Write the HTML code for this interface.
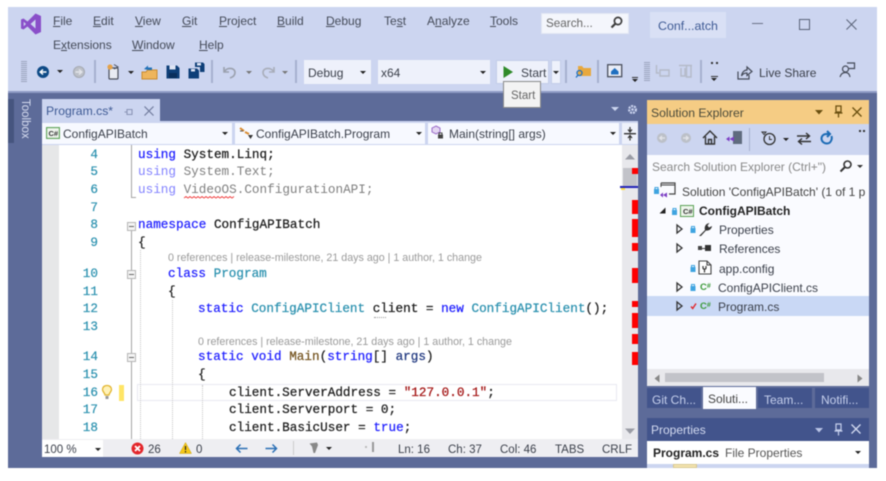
<!DOCTYPE html>
<html><head><meta charset="utf-8"><style>
html,body{margin:0;padding:0;background:#fff;width:886px;height:481px;overflow:hidden}
#s{position:absolute;left:0;top:0;width:886px;height:481px;overflow:hidden;filter:blur(.5px);font-family:"Liberation Sans",sans-serif}
.r{position:absolute}
.t{position:absolute;white-space:nowrap;font-size:12px;line-height:16px;color:#3a3f4a}
.m{color:#444a58}
.m u{text-decoration:underline;text-underline-offset:1px}
.c{position:absolute;white-space:pre;font:12.66px/16px "Liberation Mono",monospace;color:#1c1c1c;-webkit-text-stroke:.25px currentColor}
.n{position:absolute;width:20px;text-align:right;left:78px;font:12.66px/16px "Liberation Mono",monospace;color:#2b91af;-webkit-text-stroke:.2px currentColor}
.k{color:#1f1fff}.y{color:#2b91af}.g{color:#8a8a8a}
.l{position:absolute;white-space:nowrap;font-size:10.7px;line-height:14px;color:#9a9a9a}
.w{position:absolute;width:0;border-left:4px solid transparent;border-right:4px solid transparent;border-top:4px solid #222}
.x{position:absolute;width:0;border-left:3px solid transparent;border-right:3px solid transparent;border-top:3px solid #222}
.b{position:absolute;background:#fff}
.red{position:absolute;left:632px;width:6px;background:#f00}
svg{position:absolute;overflow:visible}
</style></head><body><div id="s">
<!-- frame -->
<div class="r" style="left:8px;top:7px;width:869px;height:461px;background:#ccd5f0"></div>
<div class="r" style="left:8px;top:92px;width:869px;height:376px;background:#5d6b99"></div>
<div class="r" style="left:8px;top:91px;width:869px;height:2px;background:#8f9bc4"></div>

<!-- VS logo -->
<svg style="left:20px;top:13px" width="22" height="22" viewBox="0 0 22 22"><path d="M15.5 0.5 L21 3 V19 L15.5 21.5 L7.5 13.5 L3.5 16.5 L1 15.5 V6.5 L3.5 5.5 L7.5 8.5 Z M15.5 6.5 L10.5 11 L15.5 15.5 Z M3.7 8.7 V13.3 L6 11 Z" fill="#8a4fc9" fill-rule="evenodd"/></svg>

<!-- menus -->
<div class="t m" style="left:53px;top:13px"><u>F</u>ile</div>
<div class="t m" style="left:93px;top:13px"><u>E</u>dit</div>
<div class="t m" style="left:135px;top:13px"><u>V</u>iew</div>
<div class="t m" style="left:182px;top:13px"><u>G</u>it</div>
<div class="t m" style="left:219px;top:13px"><u>P</u>roject</div>
<div class="t m" style="left:277px;top:13px"><u>B</u>uild</div>
<div class="t m" style="left:326px;top:13px"><u>D</u>ebug</div>
<div class="t m" style="left:384px;top:13px">Te<u>s</u>t</div>
<div class="t m" style="left:427px;top:13px">A<u>n</u>alyze</div>
<div class="t m" style="left:490px;top:13px"><u>T</u>ools</div>
<div class="t m" style="left:53px;top:37px">E<u>x</u>tensions</div>
<div class="t m" style="left:132px;top:37px"><u>W</u>indow</div>
<div class="t m" style="left:199px;top:37px"><u>H</u>elp</div>

<!-- search -->
<div class="b" style="left:541px;top:13px;width:88px;height:21px;background:#f4f6fc;border:1px solid #e2e6f4;box-sizing:border-box"></div>
<div class="t" style="left:546px;top:16px;color:#666;font-size:11.7px">Search...</div>
<svg style="left:609px;top:15px" width="16" height="16" viewBox="0 0 16 16"><circle cx="9" cy="6" r="3.6" fill="none" stroke="#3c3c3c" stroke-width="1.7"/><path d="M6.5 8.5 L2.5 12.5" stroke="#3c3c3c" stroke-width="2.2"/></svg>
<!-- title -->
<div class="r" style="left:650px;top:12px;width:76px;height:26px;background:#d9e0f5"></div>
<div class="t" style="left:658px;top:18px;color:#3e5a94;font-size:12.4px">Conf...atch</div>
<!-- window btns -->
<div class="r" style="left:752px;top:23px;width:11px;height:1px;background:#6a7288"></div>
<div class="r" style="left:799px;top:19px;width:9px;height:9px;border:1px solid #5a6278"></div>
<svg style="left:846px;top:19px" width="11" height="11"><path d="M0.5 0.5L10.5 10.5M10.5 0.5L0.5 10.5" stroke="#5a6278" stroke-width="1"/></svg>

<!-- toolbar -->
<div class="r" style="left:21px;top:60px;width:6px;height:22px;background:repeating-linear-gradient(0deg,#9aa3bd 0 1px,#ccd5f0 1px 2px)"></div>
<svg style="left:36px;top:65px" width="14" height="14"><circle cx="7" cy="7" r="6" fill="#0e4a86"/><path d="M10.5 7H5M7 4.5L4.2 7L7 9.5" stroke="#fff" stroke-width="1.5" fill="none"/></svg>
<div class="x" style="left:57px;top:70px"></div>
<svg style="left:72px;top:65px" width="14" height="14"><circle cx="7" cy="7" r="5.5" fill="#bcc0c8" stroke="#a5a9b2"/><path d="M3.5 7H9M7 4.5L9.8 7L7 9.5" stroke="#e3e5ea" stroke-width="1.4" fill="none"/></svg>
<div class="r" style="left:94px;top:60px;width:2px;height:23px;background:#a6b0cf"></div>
<svg style="left:105px;top:63px" width="16" height="18"><rect x="4" y="5" width="9" height="11" rx="1" fill="#e8ebf2" stroke="#4a4f5c" stroke-width="1.2"/><circle cx="5" cy="4" r="2.6" fill="#e4a24a"/><path d="M9 1.5 L13 4 L9 6" fill="none" stroke="#4a4f5c"/></svg>
<div class="x" style="left:128px;top:71px"></div>
<svg style="left:141px;top:64px" width="17" height="16"><path d="M1 8H5L6.5 6H16V15H1Z" fill="#eeb55c" stroke="#c98a2e"/><path d="M3 5 L7 1.5 V3.500 H11 V6 H7" fill="#2272b8"/></svg>
<svg style="left:166px;top:65px" width="14" height="14"><path d="M0.5 0.5H11L13.5 3V13.5H0.5Z" fill="#0e3f78"/><rect x="3.5" y="0.5" width="6" height="4" fill="#dfe5f4"/><rect x="3" y="8" width="8" height="5" fill="#0a2f5c"/></svg>
<svg style="left:188px;top:62px" width="17" height="17"><path d="M0.5 6.5H9L11 8.5V16.5H0.5Z" fill="#0e3f78"/><path d="M7 0.5H15L16.5 2V10H12V5H7Z" fill="#0e3f78"/><rect x="9" y="1" width="4" height="2.5" fill="#dfe5f4"/><rect x="3" y="7" width="4" height="2.5" fill="#dfe5f4"/></svg>
<div class="r" style="left:211px;top:60px;width:2px;height:23px;background:#a6b0cf"></div>
<svg style="left:222px;top:64px" width="16" height="16"><path d="M2 3V8H7M2.5 7.5C5 3 13 3.5 13 8.5C13 11 11 13 8 14" fill="none" stroke="#9aa0ad" stroke-width="1.6"/></svg>
<div class="x" style="left:246px;top:71px;border-top-color:#777"></div>
<svg style="left:260px;top:64px" width="16" height="16"><path d="M14 3V8H9M13.5 7.5C11 3 3 3.5 3 8.5C3 11 5 13 8 14" fill="none" stroke="#a8adb9" stroke-width="1.6"/></svg>
<div class="x" style="left:282px;top:71px;border-top-color:#777"></div>
<div class="r" style="left:295px;top:60px;width:2px;height:23px;background:#a6b0cf"></div>

<div class="b" style="left:304px;top:60px;width:67px;height:24px;background:#eef1fb"></div>
<div class="t" style="left:308px;top:65px">Debug</div>
<div class="x" style="left:360px;top:71px"></div>
<div class="b" style="left:378px;top:60px;width:112px;height:24px;background:#eef1fb"></div>
<div class="t" style="left:381px;top:65px">x64</div>
<div class="x" style="left:480px;top:71px"></div>
<div class="b" style="left:496px;top:60px;width:53px;height:24px;background:#eef1fb;border:1px solid #c3cde8;box-sizing:border-box"></div>
<svg style="left:503px;top:66px" width="10" height="12"><path d="M0.5 0L10 6L0.5 12Z" fill="#2f8a2a"/></svg>
<div class="t" style="left:521px;top:65px">Start</div>
<div class="b" style="left:551px;top:60px;width:10px;height:24px;background:#eef1fb;border:1px solid #c3cde8;box-sizing:border-box"></div>
<div class="x" style="left:553px;top:71px"></div>
<div class="r" style="left:565px;top:60px;width:2px;height:23px;background:#a6b0cf"></div>
<svg style="left:575px;top:63px" width="17" height="16"><path d="M3 3H7L8.5 5H16V13H3Z" fill="#e8a83e"/><circle cx="4.5" cy="10" r="2.5" fill="none" stroke="#1f6fbf" stroke-width="1.3"/><path d="M3 12L1 14.5" stroke="#1f6fbf" stroke-width="1.3"/></svg>
<div class="r" style="left:597px;top:60px;width:2px;height:23px;background:#a6b0cf"></div>
<svg style="left:607px;top:64px" width="16" height="15"><rect x="0.7" y="0.7" width="14" height="12" fill="#e9edf7" stroke="#4a4f5c" stroke-width="1.3"/><path d="M4 7.5L7.7 4L11.5 7.5V10.5H4Z" fill="#1f6fbf"/></svg>
<div class="r" style="left:632px;top:77px;width:6px;height:1px;background:#333"></div><div class="x" style="left:632px;top:79px"></div>
<div class="r" style="left:644px;top:61px;width:6px;height:20px;background:repeating-linear-gradient(0deg,#9aa3bd 0 1px,#ccd5f0 1px 2px)"></div>
<svg style="left:655px;top:64px" width="16" height="14"><path d="M1.5 1V9H4M5 6H14V12H5Z" fill="none" stroke="#b4bac8" stroke-width="1.4"/></svg>
<svg style="left:678px;top:63px" width="16" height="16"><path d="M1 2.5H14M3 5V13H7V5M8.5 2.5V14H13V2.5" fill="none" stroke="#b4bac8" stroke-width="1.4"/></svg>
<div class="r" style="left:700px;top:60px;width:2px;height:23px;background:#a6b0cf"></div>
<div class="r" style="left:711px;top:62px;width:2px;height:2px;background:#333"></div><div class="r" style="left:716px;top:62px;width:2px;height:2px;background:#333"></div>
<div class="r" style="left:711px;top:76px;width:7px;height:1px;background:#333"></div><div class="x" style="left:711px;top:78px"></div>
<svg style="left:737px;top:65px" width="16" height="15"><path d="M1 6.5V14H12V10M4.5 11C5 7 7.5 5 10 5V2L15 6.5L10 10.5V8C7.5 8 5.5 9 4.5 11Z" fill="none" stroke="#444a58" stroke-width="1.2"/></svg>
<div class="t" style="left:759px;top:65px">Live Share</div>
<svg style="left:839px;top:61px" width="17" height="17"><circle cx="6.5" cy="8" r="3" fill="none" stroke="#444a58" stroke-width="1.2"/><path d="M1 16C2 12.5 4 11.5 6.5 11.5C9 11.5 10.5 13 11 16M8 2H15.5V7.5H10" fill="none" stroke="#444a58" stroke-width="1.2"/></svg>

<!-- toolbox -->
<div class="r" style="left:8px;top:99px;width:6px;height:44px;background:#46557f"></div>
<div class="t" style="left:18px;top:99px;color:#d6dcf0;font-size:11.5px;writing-mode:vertical-rl;line-height:14px">Toolbox</div>

<!-- editor -->
<div class="r" style="left:42px;top:99px;width:118px;height:22px;background:#ccd5f0"></div>
<div class="t" style="left:46px;top:103px;color:#3e5a94;font-size:12.2px">Program.cs*</div>
<svg style="left:124px;top:108px" width="10" height="8"><path d="M0.5 4H3M3 1.5V6.5H8V1.5Z" fill="none" stroke="#8a94b5" stroke-width="1.1"/></svg>
<svg style="left:144px;top:106px" width="10" height="10"><path d="M0.5 0.5L9.5 9.5M9.5 0.5L0.5 9.5" stroke="#6f7a9c" stroke-width="1.2"/></svg>
<svg style="left:611px;top:107px" width="8" height="5"><path d="M0 0H8L4 4Z" fill="#ccd5f0"/></svg>
<svg style="left:627px;top:104px" width="11" height="11"><circle cx="5.5" cy="5.5" r="3.4" fill="none" stroke="#ccd5f0" stroke-width="2.2" stroke-dasharray="2 .9"/><circle cx="5.5" cy="5.5" r="1.3" fill="#ccd5f0"/></svg>

<div class="r" style="left:42px;top:121px;width:596px;height:24px;background:#ccd5f0"></div>
<div class="b" style="left:42px;top:123px;width:190px;height:21px;background:#f7f9ff"></div>
<div class="b" style="left:235px;top:123px;width:190px;height:21px;background:#f7f9ff"></div>
<div class="b" style="left:428px;top:123px;width:191px;height:21px;background:#f7f9ff"></div>
<div class="b" style="left:622px;top:123px;width:16px;height:21px;background:#eef1fb"></div>
<svg style="left:46px;top:127px" width="14" height="12"><rect x="0.6" y="0.6" width="12.8" height="10.8" fill="#f0f5ee" stroke="#5aa155" stroke-width="1.1"/><text x="2.5" y="9" font-family="Liberation Sans" font-size="7.5" font-weight="bold" fill="#333">C#</text></svg>
<div class="t" style="left:63px;top:126px">ConfigAPIBatch</div>
<div class="x" style="left:222px;top:132px"></div>
<svg style="left:238px;top:126px" width="15" height="14"><path d="M2 2L6 5M7 6L11 8" stroke="#d98a2e" stroke-width="2"/><path d="M10 9H15L12.5 13Z" fill="#333"/><path d="M2 5h3" stroke="#555"/></svg>
<div class="t" style="left:256px;top:126px">ConfigAPIBatch.Program</div>
<div class="x" style="left:416px;top:132px"></div>
<svg style="left:431px;top:125px" width="16" height="15"><path d="M5 1L9 3V7L5 9L1 7V3Z" fill="#e3d6f2" stroke="#9a6bc9"/><rect x="7" y="9.5" width="5" height="4" fill="#444"/><path d="M8 9.5V8H11V9.5" fill="none" stroke="#444"/></svg>
<div class="t" style="left:449px;top:126px">Main(string[] args)</div>
<div class="x" style="left:610px;top:132px"></div>
<svg style="left:624px;top:127px" width="12" height="14"><path d="M0 6.7H12" stroke="#333" stroke-width="1.4"/><path d="M6 0V4M4 2.5L6 5L8 2.5M6 13.5V9.5M4 11L6 8.5L8 11" fill="none" stroke="#333" stroke-width="1.2"/></svg>

<!-- code area -->
<div class="b" style="left:42px;top:145px;width:580px;height:294px"></div>
<div class="r" style="left:42px;top:145px;width:17px;height:294px;background:#e6e7e8"></div>
<div class="r" style="left:622px;top:145px;width:16px;height:294px;background:#e8e8ec"></div>
<div class="r" style="left:131px;top:145px;width:1px;height:53px;background:#a5a5a5"></div>
<div class="r" style="left:132px;top:197px;width:4px;height:1px;background:#a5a5a5"></div>
<div class="r" style="left:131px;top:230px;width:1px;height:209px;background:#a5a5a5"></div>
<div class="r" style="left:119px;top:385px;width:5px;height:16px;background:#ffe566"></div>
<div class="r" style="left:137px;top:384px;width:480px;height:17px;border:1px solid #e8e9f1;box-sizing:border-box"></div>

<!-- guides -->
<div class="r" style="left:140px;top:250px;width:0;height:189px;border-left:1px dotted #c4c4c4"></div>
<div class="r" style="left:172px;top:300px;width:0;height:139px;border-left:1px dotted #c4c4c4"></div>
<div class="r" style="left:202px;top:385px;width:0;height:54px;border-left:1px dotted #c4c4c4"></div>

<!-- collapse boxes -->
<div class="r" style="left:127px;top:222px;width:7px;height:7px;background:#f4f4f4;border:1px solid #b5b5b5"><div style="position:absolute;left:1px;top:3px;width:5px;height:1px;background:#666"></div></div>
<div class="r" style="left:127px;top:270px;width:7px;height:7px;background:#f4f4f4;border:1px solid #b5b5b5"><div style="position:absolute;left:1px;top:3px;width:5px;height:1px;background:#666"></div></div>
<div class="r" style="left:127px;top:353px;width:7px;height:7px;background:#f4f4f4;border:1px solid #b5b5b5"><div style="position:absolute;left:1px;top:3px;width:5px;height:1px;background:#666"></div></div>

<!-- numbers -->
<div class="n" style="top:147px">4</div><div class="n" style="top:164px">5</div><div class="n" style="top:182px">6</div><div class="n" style="top:200px">7</div><div class="n" style="top:217px">8</div><div class="n" style="top:235px">9</div><div class="n" style="top:266px">10</div><div class="n" style="top:284px">11</div><div class="n" style="top:301px">12</div><div class="n" style="top:319px">13</div><div class="n" style="top:349px">14</div><div class="n" style="top:367px">15</div><div class="n" style="top:385px">16</div><div class="n" style="top:402px">17</div><div class="n" style="top:420px">18</div>

<svg style="left:101px;top:384px" width="12" height="16"><path d="M6 1.5C3 1.5 1.5 3.5 1.5 5.5C1.5 8 4 9 4 11H8C8 9 10.500 8 10.500 5.500C10.500 3.500 9 1.500 6 1.500Z" fill="#fff2b8" stroke="#e2b52e" stroke-width="1.3"/><rect x="4.5" y="12" width="3" height="3" fill="#999"/></svg>

<!-- code -->
<div class="c" style="left:138px;top:147px"><span class="k">using</span> System.Linq;</div>
<div class="c" style="left:138px;top:164px;color:#7f7f7f;-webkit-text-stroke:0"><span style="color:#8282ff">using</span> System.Text;</div>
<div class="c" style="left:138px;top:182px;color:#7f7f7f;-webkit-text-stroke:0"><span style="color:#8282ff">using</span> VideoOS.ConfigurationAPI;</div>
<svg style="left:184px;top:196px" width="52" height="3"><path d="M0 2 L2 0.500 L4 2 L6 0.500 L8 2 L10 0.500 L12 2 L14 0.500 L16 2 L18 0.500 L20 2 L22 0.500 L24 2 L26 0.500 L28 2 L30 0.500 L32 2 L34 0.500 L36 2 L38 0.500 L40 2 L42 0.500 L44 2 L46 0.500 L48 2 L50 0.500" fill="none" stroke="#f04040" stroke-width=".9"/></svg>
<div class="c" style="left:138px;top:217px"><span class="k">namespace</span> ConfigAPIBatch</div>
<div class="c" style="left:138px;top:235px">{</div>
<div class="l" style="left:168px;top:251px">0 references | release-milestone, 21 days ago | 1 author, 1 change</div>
<div class="c" style="left:168px;top:266px"><span class="k">class</span> <span class="y">Program</span></div>
<div class="c" style="left:168px;top:284px">{</div>
<div class="c" style="left:198px;top:301px"><span class="k">static</span> <span class="y">ConfigAPIClient</span> client = <span class="k">new</span> <span class="y">ConfigAPIClient</span>();</div>
<div class="r" style="left:374px;top:317px;width:12px;height:0;border-top:1px dotted #999"></div>
<div class="l" style="left:198px;top:335px">0 references | release-milestone, 21 days ago | 1 author, 1 change</div>
<div class="c" style="left:198px;top:349px"><span class="k">static</span> <span class="k">void</span> <span style="color:#74531f">Main</span>(<span class="k">string</span>[] <span style="color:#1f377f">args</span>)</div>
<div class="c" style="left:198px;top:367px">{</div>
<div class="c" style="left:229px;top:385px">client.ServerAddress = <span style="color:#a31515">"127.0.0.1"</span>;</div>
<div class="c" style="left:229px;top:402px">client.Serverport = 0;</div>
<div class="c" style="left:229px;top:420px">client.BasicUser = <span class="k">true</span>;</div>

<!-- scrollbar / marks -->
<svg style="left:624px;top:153px" width="12" height="7"><path d="M1 6.500L6 1L11 6.500Z" fill="#9a9ca5"/></svg>
<svg style="left:624px;top:428px" width="12" height="7"><path d="M1 .5L6 6L11 .5Z" fill="#9a9ca5"/></svg>
<div class="r" style="left:623px;top:168px;width:14px;height:20px;background:#c2c3c9"></div>
<div class="r" style="left:620px;top:186px;width:18px;height:2px;background:#2222b8"></div>
<div class="r" style="left:621px;top:188px;width:4px;height:2px;background:#ffe040"></div>
<div class="red" style="top:168px;height:6px"></div><div class="red" style="top:200px;height:14px"></div><div class="red" style="top:219px;height:18px"></div><div class="red" style="top:243px;height:8px"></div><div class="red" style="top:268px;height:15px"></div><div class="red" style="top:301px;height:6px"></div><div class="red" style="top:313px;height:15px"></div><div class="red" style="top:334px;height:10px"></div><div class="red" style="top:352px;height:13px"></div>

<!-- status bar -->
<div class="r" style="left:42px;top:439px;width:596px;height:18px;background:#eeeef2"></div>
<div class="b" style="left:42px;top:440px;width:61px;height:17px"></div>
<div class="t" style="left:44px;top:442px;font-size:11.5px">100 %</div>
<div class="x" style="left:95px;top:448px"></div>
<svg style="left:131px;top:442px" width="13" height="13"><circle cx="6.500" cy="6.500" r="6" fill="#e3262b"/><path d="M4 4L9 9M9 4L4 9" stroke="#fff" stroke-width="1.8"/></svg>
<div class="t" style="left:148px;top:442px;font-size:11.5px">26</div>
<svg style="left:179px;top:442px" width="13" height="12"><path d="M6.500 0.500L12.500 11.500H.5Z" fill="#f6c817" stroke="#c9a211" stroke-width=".5"/><path d="M6.500 4V8M6.500 9V10.500" stroke="#222" stroke-width="1.2"/></svg>
<div class="t" style="left:196px;top:442px;font-size:11.5px">0</div>
<svg style="left:235px;top:443px" width="13" height="11"><path d="M12.500 5.500H1.500M5.500 1.500L1.500 5.500L5.500 9.500" fill="none" stroke="#2a6fb5" stroke-width="1.500"/></svg>
<svg style="left:265px;top:443px" width="13" height="11"><path d="M.5 5.500H11.500M7.500 1.500L11.500 5.500L7.500 9.500" fill="none" stroke="#2a6fb5" stroke-width="1.500"/></svg>
<div class="r" style="left:293px;top:441px;width:1px;height:14px;background:#ccc"></div>
<svg style="left:309px;top:442px" width="13" height="12"><path d="M.5 1.500L8 .5L9 3L6 11L4.500 11L3 4.500Z" fill="#888"/></svg>
<div class="x" style="left:326px;top:447px"></div>
<div class="r" style="left:372px;top:442px;width:2px;height:10px;background:#999"></div>
<div class="r" style="left:365px;top:446px;width:2px;height:2px;background:#bbb"></div>
<div class="t" style="left:398px;top:442px;font-size:11.5px">Ln: 16</div>
<div class="t" style="left:448px;top:442px;font-size:11.5px">Ch: 37</div>
<div class="t" style="left:500px;top:442px;font-size:11.5px">Col: 46</div>
<div class="t" style="left:555px;top:442px;font-size:11.5px">TABS</div>
<div class="t" style="left:602px;top:442px;font-size:11.5px">CRLF</div>

<!-- solution explorer -->
<div class="r" style="left:647px;top:100px;width:222px;height:24px;background:#f5cc84"></div>
<div class="t" style="left:651px;top:105px;color:#4a4a3a;font-size:12.2px">Solution Explorer</div>
<svg style="left:815px;top:110px" width="8" height="5"><path d="M0 0H8L4 4.500Z" fill="#6a4f10"/></svg>
<svg style="left:834px;top:105px" width="9" height="13"><path d="M2 1H7V7H2ZM0.500 8H8.500M4.500 8V12.500" fill="none" stroke="#6a4f10" stroke-width="1.300"/></svg>
<svg style="left:852px;top:107px" width="10" height="10"><path d="M.5 .5L9.500 9.500M9.500 .5L.5 9.500" stroke="#6a4f10" stroke-width="1.300"/></svg>

<div class="r" style="left:647px;top:124px;width:222px;height:31px;background:#ccd5f0"></div>
<svg style="left:656px;top:132px" width="12" height="12"><circle cx="6" cy="6" r="5" fill="#bcc0c8"/><path d="M9 6H4M6 4L3.800 6L6 8" stroke="#e3e5ea" stroke-width="1.300" fill="none"/></svg>
<svg style="left:680px;top:132px" width="12" height="12"><circle cx="6" cy="6" r="5" fill="#bcc0c8"/><path d="M3 6H8M6 4L8.200 6L6 8" stroke="#e3e5ea" stroke-width="1.300" fill="none"/></svg>
<svg style="left:702px;top:130px" width="16" height="15"><path d="M1 8L8 1L15 8M3.500 6.500V14H12.500V6.500M6.500 14V9.500H9.500V14" fill="none" stroke="#333" stroke-width="1.400"/></svg>
<svg style="left:725px;top:130px" width="18" height="15"><rect x="8" y="1" width="9" height="13" fill="#5f6b7e"/><path d="M1 9L4.500 6.500V11.500ZM4.500 9L9 6.500V11.500L4.500 9Z" fill="#7c3fc4"/></svg>
<div class="r" style="left:749px;top:128px;width:1px;height:23px;background:#a6b0cf"></div>
<svg style="left:761px;top:131px" width="16" height="15"><circle cx="8.500" cy="8" r="5.500" fill="none" stroke="#333" stroke-width="1.300"/><path d="M8.500 5V8.500H11M1 1H5L3 3.500Z" fill="none" stroke="#333"/></svg>
<div class="x" style="left:783px;top:138px"></div>
<svg style="left:797px;top:132px" width="14" height="13"><path d="M0 4H12M9 1L12.500 4L9 7M14 9.500H2M5 6.500L1.500 9.500L5 12.500" fill="none" stroke="#333" stroke-width="1.400"/></svg>
<svg style="left:820px;top:130px" width="14" height="16"><path d="M11.500 6C12.500 9.500 10.500 13.500 7 13.500C3.500 13.500 1.500 11 1.500 8.500C1.500 6 3.500 4 6.500 4H9M7 1L10 4L7 7" fill="none" stroke="#1c6bb5" stroke-width="2"/></svg>
<div class="r" style="left:859px;top:130px;width:2px;height:2px;background:#333"></div><div class="r" style="left:863px;top:130px;width:2px;height:2px;background:#333"></div>

<div class="b" style="left:647px;top:155px;width:222px;height:24px;background:#fafbff"></div>
<div class="t" style="left:652px;top:159px;color:#888;font-size:12px">Search Solution Explorer (Ctrl+")</div>
<svg style="left:839px;top:159px" width="14" height="14"><circle cx="8.500" cy="5.500" r="3.500" fill="none" stroke="#333" stroke-width="1.600"/><path d="M6 8L1.500 12.500" stroke="#333" stroke-width="2"/></svg>
<div class="x" style="left:857px;top:165px;border-top-color:#333"></div>

<div class="b" style="left:647px;top:179px;width:222px;height:190px;background:#fafbff"></div>
<div class="r" style="left:647px;top:296px;width:222px;height:20px;background:#c9d8f5"></div>

<svg style="left:653px;top:182px" width="24" height="17"><rect x="1" y="7" width="5" height="5" fill="#3fa4e0"/><path d="M2 7V5.500H5V7" fill="none" stroke="#3fa4e0"/><path d="M8 1H22V12H16" fill="none" stroke="#444" stroke-width="1.200"/><path d="M8 1V5M8 3H22" stroke="#444"/><path d="M7 13L10 10.500V15.500ZM10 13L14 10.500V15.500Z" fill="#7c3fc4"/></svg>
<div class="t" style="left:682px;top:184px;color:#444">Solution 'ConfigAPIBatch' (1 of 1 p</div>

<svg style="left:659px;top:207px" width="7" height="7"><path d="M6.500 .5V6.500H.5Z" fill="#222"/></svg>
<svg style="left:671px;top:205px" width="24" height="12"><rect x="1" y="5" width="5" height="5" fill="#3fa4e0"/><path d="M2 5V3.500H5V5" fill="none" stroke="#3fa4e0"/><rect x="9.500" y=".5" width="13" height="11" fill="#eef5ec" stroke="#5aa155"/><text x="12" y="9" font-family="Liberation Sans" font-size="7.500" font-weight="bold" fill="#333">C#</text></svg>
<div class="t" style="left:699px;top:203px;font-weight:bold;color:#222;font-size:12px">ConfigAPIBatch</div>

<svg style="left:676px;top:224px" width="7" height="10"><path d="M1 1L6 5L1 9Z" fill="none" stroke="#333" stroke-width="1.300"/></svg>
<svg style="left:690px;top:225px" width="7" height="9"><rect x=".5" y="3" width="5" height="5" fill="#3fa4e0"/><path d="M1.500 3V1.500H4.500V3" fill="none" stroke="#3fa4e0"/></svg>
<svg style="left:698px;top:222px" width="15" height="15"><path d="M1 14L7 8C6 5 7.500 1.500 11.500 1L9.500 3.500L11 5.500L14 4C13.500 7.500 10.500 9 8 8.500L3 14Z" fill="#333"/></svg>
<div class="t" style="left:719px;top:222px;font-size:12px">Properties</div>

<svg style="left:676px;top:243px" width="7" height="10"><path d="M1 1L6 5L1 9Z" fill="none" stroke="#333" stroke-width="1.300"/></svg>
<div class="r" style="left:698px;top:246px;width:4px;height:4px;background:#444"></div><div class="r" style="left:702px;top:248px;width:3px;height:1px;background:#444"></div><div class="r" style="left:705px;top:245px;width:6px;height:6px;background:#333"></div>
<div class="t" style="left:719px;top:241px;font-size:12px">References</div>

<svg style="left:690px;top:264px" width="7" height="9"><rect x=".5" y="3" width="5" height="5" fill="#3fa4e0"/><path d="M1.500 3V1.500H4.500V3" fill="none" stroke="#3fa4e0"/></svg>
<svg style="left:698px;top:260px" width="14" height="15"><path d="M1 1H9L13 5V14H1ZM9 1V5H13" fill="#fff" stroke="#444" stroke-width="1.100"/><path d="M5 6V8C5 9.500 8 9.500 8 8V6M6.500 9.500V12.500" fill="none" stroke="#333" stroke-width="1.200"/></svg>
<div class="t" style="left:719px;top:261px;font-size:12px">app.config</div>

<svg style="left:676px;top:282px" width="7" height="10"><path d="M1 1L6 5L1 9Z" fill="none" stroke="#333" stroke-width="1.300"/></svg>
<svg style="left:690px;top:283px" width="7" height="9"><rect x=".5" y="3" width="5" height="5" fill="#3fa4e0"/><path d="M1.500 3V1.500H4.500V3" fill="none" stroke="#3fa4e0"/></svg>
<div class="t" style="left:700px;top:279px;color:#3c9a3a;font-weight:bold;font-size:9.500px">C<span style="font-size:7px;vertical-align:2px">#</span></div>
<div class="t" style="left:718px;top:280px;font-size:12px">ConfigAPIClient.cs</div>

<svg style="left:676px;top:301px" width="7" height="10"><path d="M1 1L6 5L1 9Z" fill="none" stroke="#333" stroke-width="1.300"/></svg>
<svg style="left:690px;top:302px" width="7" height="8"><path d="M1 4.500L2.700 6.500L6 1.500" fill="none" stroke="#e0262b" stroke-width="1.400"/></svg>
<div class="t" style="left:700px;top:298px;color:#3c9a3a;font-weight:bold;font-size:9.500px">C<span style="font-size:7px;vertical-align:2px">#</span></div>
<div class="t" style="left:718px;top:299px;font-size:12px">Program.cs</div>

<!-- h scrollbar -->
<div class="r" style="left:647px;top:369px;width:222px;height:17px;background:#e8e8ec"></div>
<svg style="left:654px;top:374px" width="6" height="9"><path d="M5.500 .5V8.500L.5 4.500Z" fill="#888"/></svg>
<div class="r" style="left:665px;top:373px;width:159px;height:9px;background:#c2c3c9"></div>
<svg style="left:857px;top:374px" width="6" height="9"><path d="M.5 .5V8.500L5.500 4.500Z" fill="#888"/></svg>

<!-- tabs -->
<div class="r" style="left:647px;top:388px;width:54px;height:20px;background:#42548c"></div>
<div class="t" style="left:652px;top:392px;color:#c5cfec;font-size:12px">Git Ch...</div>
<div class="r" style="left:703px;top:387px;width:53px;height:22px;background:#fafbff"></div>
<div class="t" style="left:708px;top:391px;color:#444;font-size:12px">Soluti...</div>
<div class="r" style="left:758px;top:388px;width:54px;height:20px;background:#42548c"></div>
<div class="t" style="left:764px;top:392px;color:#c5cfec;font-size:12px">Team...</div>
<div class="r" style="left:815px;top:388px;width:54px;height:20px;background:#42548c"></div>
<div class="t" style="left:821px;top:392px;color:#c5cfec;font-size:12px">Notifi...</div>

<!-- properties -->
<div class="r" style="left:647px;top:418px;width:222px;height:23px;background:#42548c"></div>
<div class="t" style="left:651px;top:422px;color:#d3daf0;font-size:12px">Properties</div>
<svg style="left:815px;top:428px" width="8" height="5"><path d="M0 0H8L4 4.500Z" fill="#b9c4e6"/></svg>
<svg style="left:834px;top:423px" width="9" height="13"><path d="M2 1H7V7H2ZM.5 8H8.500M4.500 8V12.500" fill="none" stroke="#c5cfec" stroke-width="1.200"/></svg>
<svg style="left:851px;top:424px" width="10" height="10"><path d="M.5 .5L9.500 9.500M9.500 .5L.5 9.500" stroke="#d3daf0" stroke-width="1.300"/></svg>
<div class="b" style="left:647px;top:441px;width:222px;height:23px"></div>
<div class="t" style="left:653px;top:445px;font-weight:bold;color:#222;font-size:12px">Program.cs</div>
<div class="t" style="left:725px;top:445px;color:#555;font-size:12px">File Properties</div>
<div class="x" style="left:855px;top:451px"></div>
<div class="r" style="left:647px;top:464px;width:222px;height:4px;background:#ccd5f0"></div>
<div class="r" style="left:673px;top:464px;width:24px;height:4px;background:#f4e4b0;border:1px solid #d8c890;box-sizing:border-box"></div>

<!-- tooltip -->
<div class="r" style="left:503px;top:81px;width:38px;height:27px;background:#f3f3f3;border:1px solid #8a8a8a;box-sizing:border-box"></div>
<div class="t" style="left:511px;top:88px;font-size:11.500px;color:#666">Start</div>
</div></body></html>
